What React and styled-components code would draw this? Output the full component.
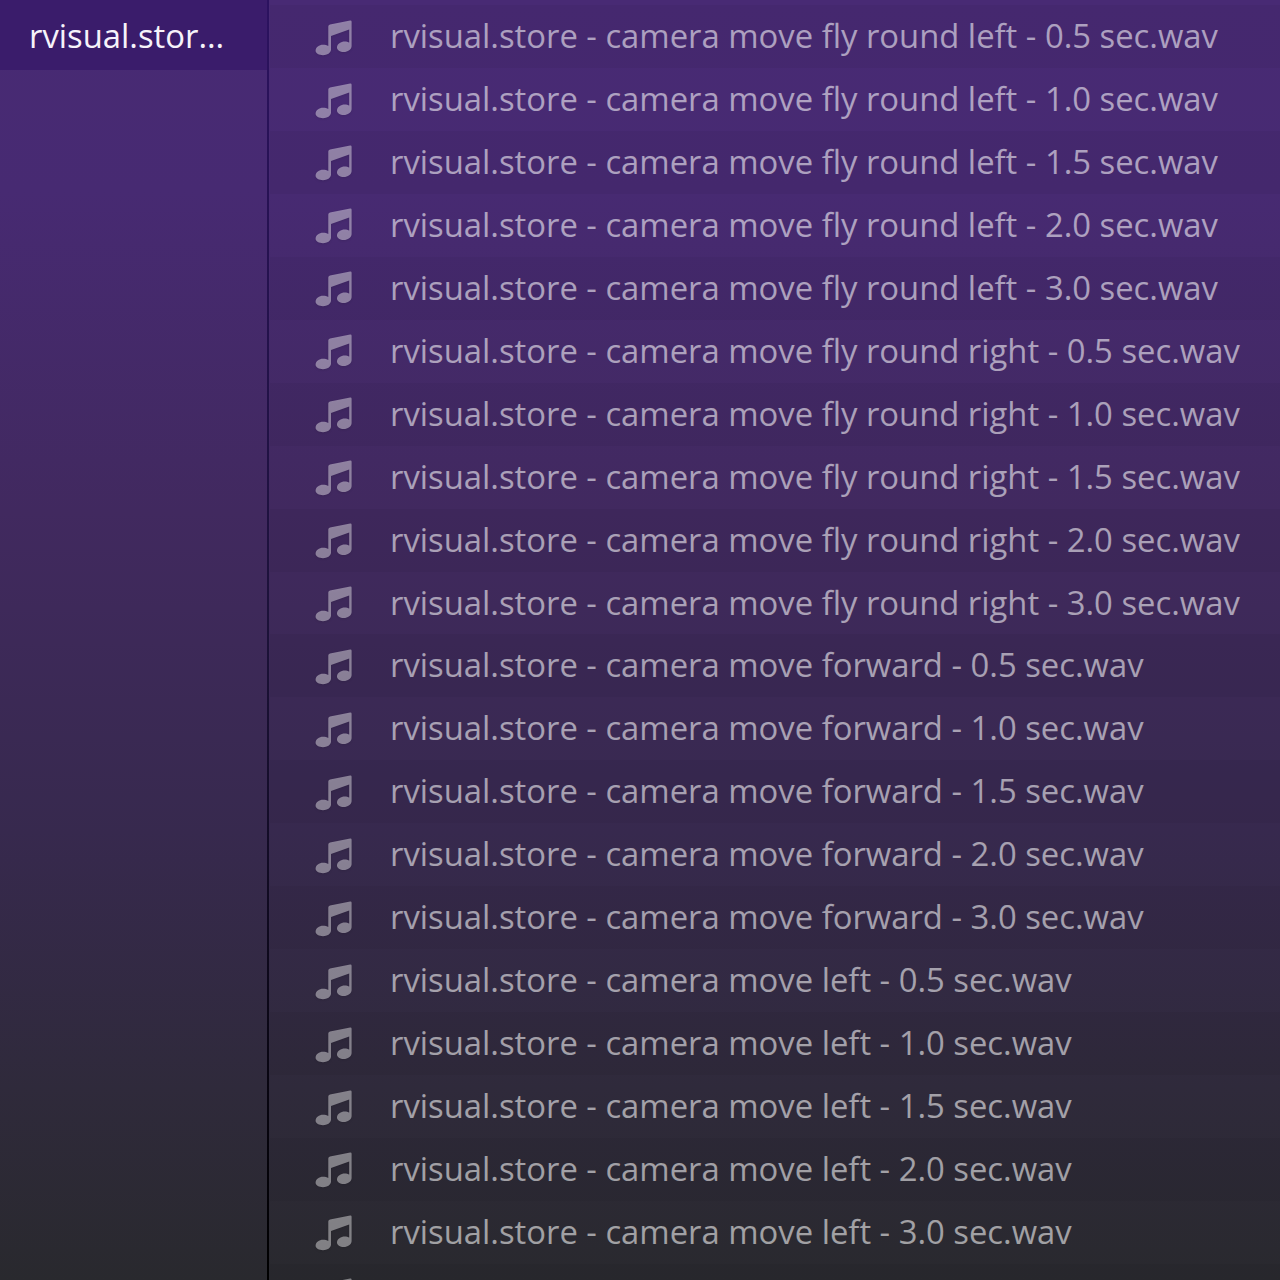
import React from 'react';
import styled, { createGlobalStyle } from 'styled-components';

const Global = createGlobalStyle`
  html, body {
    margin: 0;
    padding: 0;
    background: #2a2a2e;
  }
`;

const Window = styled.div`
  display: flex;
  width: 1280px;
  height: 1280px;
  overflow: hidden;
  font-family: "Open Sans", "Noto Sans", sans-serif;
  background: linear-gradient(180deg, #482a74 0%, #472a72 15%, #41295f 40%, #37294e 65%, #2f2a3b 85%, #29292e 100%);
`;

const Sidebar = styled.div`
  flex: 0 0 267px;
`;

const SidebarItem = styled.div`
  height: 70px;
  padding-left: 29px;
  display: flex;
  align-items: center;
  background: #3a1c6b;
  color: #f6f3fa;
  font-size: 32.8px;
  white-space: nowrap;
  box-sizing: border-box;
`;

const Divider = styled.div`
  flex: 0 0 2px;
  background: linear-gradient(180deg, #2c1260 0%, #1c1238 50%, #000000 100%);
`;

const List = styled.div`
  flex: 1;
  padding: 5.1px 0 0 1px;
`;

const Row = styled.div`
  height: 62.95px;
  display: flex;
  align-items: center;
  padding: 0 0 2px 44px;
  box-sizing: border-box;
  background: ${(p) => (p.$odd ? 'transparent' : 'rgba(0,0,0,0.035)')};
`;

const NoteIcon = styled.svg`
  flex: 0 0 42px;
  width: 42px;
  height: 42px;
  margin: 2px 34px 0 0;
  fill: rgba(255, 255, 255, 0.42);
  filter: drop-shadow(0 1px 1px rgba(0, 0, 0, 0.22));
`;

const FileName = styled.span`
  color: rgba(255, 255, 255, 0.56);
  font-size: 32.8px;
  white-space: nowrap;
`;

function Note() {
  return (
    <NoteIcon viewBox="0 0 42 42">
      <path d="M14.3 10.5 Q14.3 8.8 16 8.4 L36.2 4.6 Q37.6 4.4 37.6 5.8 V30 C37.6 33.6 33.6 36 29.8 36 C26 36 23 34.2 23 31.5 C23 27.8 27 25.4 30.8 25.4 C32.4 25.4 34 25.8 35.2 26.5 V13.5 L17 20 V33.5 C17 37 13 39.2 9 39.2 C5.2 39.2 1.6 37.5 1.6 34.8 C1.6 31.2 5.2 28.8 9 28.8 C11 28.8 13 29.3 14.3 30.1 Z" />
    </NoteIcon>
  );
}

const groups = ['fly round left', 'fly round right', 'forward', 'left'];
const times = ['0.5', '1.0', '1.5', '2.0', '3.0'];

const files = groups.flatMap((name) =>
  times.map((t) => `rvisual.store - camera move ${name} - ${t} sec.wav`),
);

export default function App() {
  return (
    <Window>
      <Global />
      <Sidebar>
        <SidebarItem>rvisual.stor...</SidebarItem>
      </Sidebar>
      <Divider />
      <List>
        {files.map((f, i) => (
          <Row key={f} $odd={i % 2 === 1}>
            <Note />
            <FileName>{f}</FileName>
          </Row>
        ))}
        <Row>
          <Note />
        </Row>
      </List>
    </Window>
  );
}
